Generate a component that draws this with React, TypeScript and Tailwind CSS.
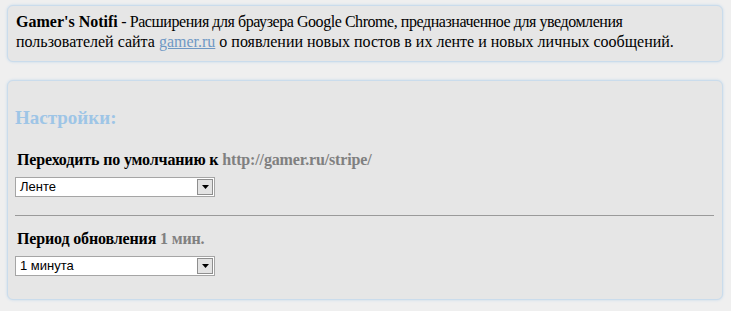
import React from "react";

function FakeSelect({ value }: { value: string }) {
  return (
    <div className="flex h-[20px] w-[200px] border border-[#a5a5a5] bg-white">
      <div className="flex-1 pl-[4px] text-[13px] leading-[18px] text-black" style={{ fontFamily: '"Liberation Sans", Arial, sans-serif' }}>
        {value}
      </div>
      <div className="m-[1px] flex w-[16px] items-center justify-center border border-[#8e8e8e] bg-[#e3e3e3]">
        <svg width="7" height="4" viewBox="0 0 7 4">
          <polygon points="0,0 7,0 3.5,4" fill="#000" />
        </svg>
      </div>
    </div>
  );
}

export default function App() {
  return (
    <div
      className="min-h-[311px] w-[731px] bg-[#efefef] pt-[5px] pl-[7px] text-black"
      style={{ fontFamily: '"Liberation Serif", "Times New Roman", serif' }}
    >
      <div className="h-[57px] w-[716px] rounded-[6px] border border-[#cadcec] bg-[#e6e6e6] px-[8px] pt-[6px] text-[16px] leading-[20px] shadow-[0_0_3px_#c4d9ec]">
        <span className="tracking-[-0.45px]">
          <b className="tracking-normal">Gamer's Notifi</b> - Расширения для браузера Google Chrome, предназначенное для уведомления
        </span>
        <br />
        пользователей сайта <a className="text-[#6f98c4] underline">gamer.ru</a> о появлении новых постов в их ленте и новых личных сообщений.
      </div>

      <div className="mt-[18px] h-[220px] w-[716px] rounded-[6px] border border-[#cadcec] bg-[#e6e6e6] pl-[7px] pr-[8px] shadow-[0_0_3px_#c4d9ec]">
        <div className="pt-[26px] text-[19px] font-bold leading-[22px] text-[#9ec5e6]">Настройки:</div>
        <div className="mt-[22px] pl-[2px] text-[16px] font-bold leading-[18px] tracking-[-0.15px]">
          Переходить по умолчанию к <span className="text-[#808080]">http://gamer.ru/stripe/</span>
        </div>
        <div className="mt-[8px]">
          <FakeSelect value="Ленте" />
        </div>
        <div className="mt-[18px] h-[1px] bg-[#9a9a9a]" />
        <div className="mt-[14px] pl-[2px] text-[16px] font-bold leading-[18px] tracking-[-0.15px]">
          Период обновления <span className="text-[#808080]">1 мин.</span>
        </div>
        <div className="mt-[8px]">
          <FakeSelect value="1 минута" />
        </div>
      </div>
    </div>
  );
}
